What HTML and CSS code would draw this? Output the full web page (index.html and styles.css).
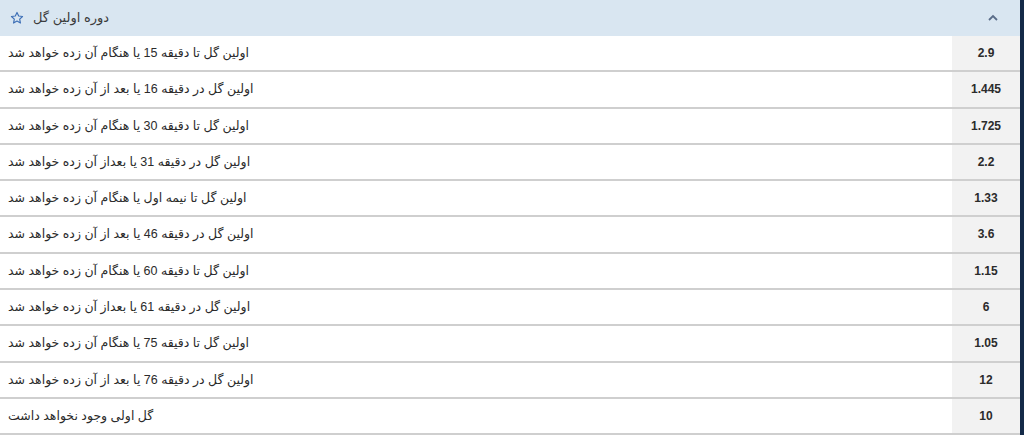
FILE: index.html
```html
<!DOCTYPE html>
<html lang="fa">
<head>
<meta charset="utf-8">
<link rel="stylesheet" href="styles.css">
</head>
<body>
<div class="page">
  <div class="market">
    <div class="market-head">
      <div class="title">
        <svg class="star" width="14" height="14" viewBox="0 0 24 24"><path d="M12 2.5l2.9 6.1 6.6.8-4.9 4.6 1.3 6.6L12 17.3l-5.9 3.3 1.3-6.6-4.9-4.6 6.6-.8z" fill="none" stroke="#3d6fb6" stroke-width="2" stroke-linejoin="round"/></svg>
        <span class="title-text">دوره اولین گل</span>
      </div>
      <svg class="chev" width="10" height="7" viewBox="0 0 10 7"><path d="M1 6l4-4 4 4" fill="none" stroke="#5a6c88" stroke-width="1.8"/></svg>
    </div>
    <div class="row"><div class="label">اولین گل تا دقیقه 15 یا هنگام آن زده خواهد شد</div><div class="odd">2.9</div></div>
    <div class="row"><div class="label">اولین گل در دقیقه 16 یا بعد از آن زده خواهد شد</div><div class="odd">1.445</div></div>
    <div class="row"><div class="label">اولین گل تا دقیقه 30 یا هنگام آن زده خواهد شد</div><div class="odd">1.725</div></div>
    <div class="row"><div class="label">اولین گل در دقیقه 31 یا بعداز آن زده خواهد شد</div><div class="odd">2.2</div></div>
    <div class="row"><div class="label">اولین گل تا نیمه اول یا هنگام آن زده خواهد شد</div><div class="odd">1.33</div></div>
    <div class="row"><div class="label">اولین گل در دقیقه 46 یا بعد از آن زده خواهد شد</div><div class="odd">3.6</div></div>
    <div class="row"><div class="label">اولین گل تا دقیقه 60 یا هنگام آن زده خواهد شد</div><div class="odd">1.15</div></div>
    <div class="row"><div class="label">اولین گل در دقیقه 61 یا بعداز آن زده خواهد شد</div><div class="odd">6</div></div>
    <div class="row"><div class="label">اولین گل تا دقیقه 75 یا هنگام آن زده خواهد شد</div><div class="odd">1.05</div></div>
    <div class="row"><div class="label">اولین گل در دقیقه 76 یا بعد از آن زده خواهد شد</div><div class="odd">12</div></div>
    <div class="row"><div class="label">گل اولی وجود نخواهد داشت</div><div class="odd">10</div></div>
  </div>
  <div class="edge"></div>
</div>
</body>
</html>
```
FILE: styles.css
```css
html, body {
  margin: 0;
  padding: 0;
  background: #ffffff;
}
body {
  font-family: "Liberation Sans", "DejaVu Sans", sans-serif;
  color: #2b2b2b;
  width: 1024px;
  height: 435px;
  overflow: hidden;
}
.page {
  display: flex;
  height: 435px;
}
.market {
  flex: 1;
  display: flex;
  flex-direction: column;
}
.edge {
  width: 4px;
  background: #142a48;
}
.market-head {
  height: 36px;
  background: #d9e6f1;
  display: flex;
  align-items: center;
  justify-content: space-between;
  padding: 0 22px 0 10px;
}
.title {
  display: flex;
  align-items: center;
  gap: 9px;
}
.star {
  display: block;
}
.title-text {
  direction: rtl;
  font-size: 13px;
  color: #3c3c3c;
}
.chev {
  display: block;
}
.row {
  display: flex;
  height: 34.3px;
  border-bottom: 2px solid #cfcfcf;
}
.label {
  flex: 1;
  direction: rtl;
  text-align: left;
  font-size: 12.5px;
  line-height: 34px;
  padding-left: 8px;
  unicode-bidi: plaintext;
}
.odd {
  width: 68px;
  background: #f2f2f2;
  text-align: center;
  font-weight: bold;
  font-size: 12px;
  line-height: 34px;
  color: #2b2b2b;
}
```
